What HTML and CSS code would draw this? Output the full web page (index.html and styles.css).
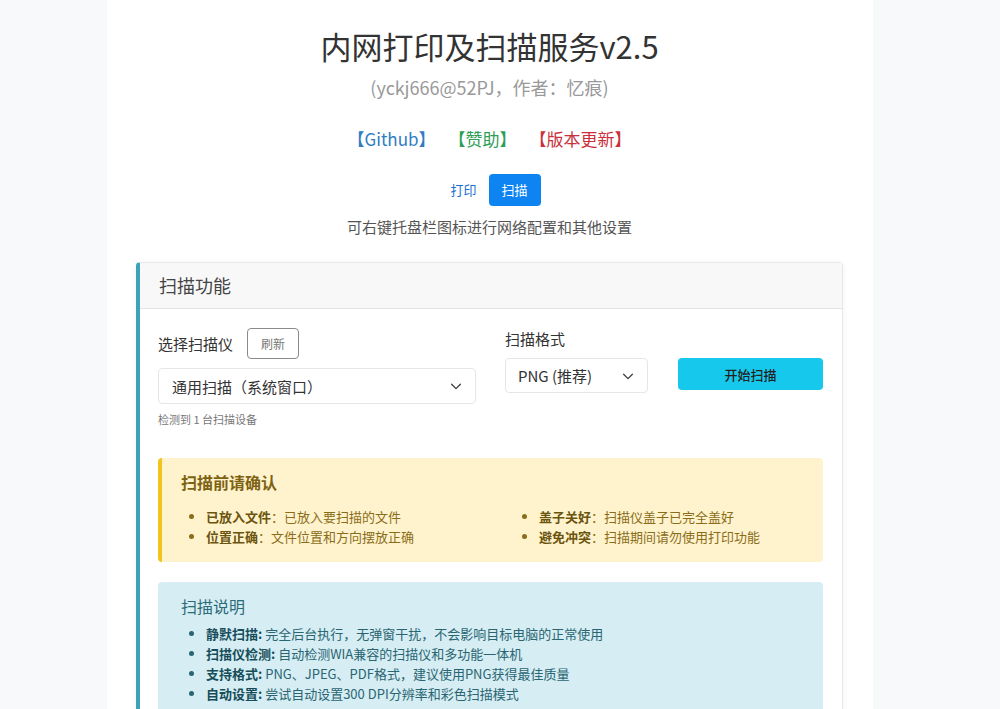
FILE: index.html
```html
<!DOCTYPE html>
<html lang="zh-CN">
<head>
  <meta charset="UTF-8">
  <meta name="viewport" content="width=device-width, initial-scale=1.0">
  <title>内网打印及扫描服务v2.5</title>
  <link rel="stylesheet" href="styles.css">
</head>
<body>
  <div class="page">
    <h1 class="title">内网打印及扫描服务v2.5</h1>
    <p class="subtitle">(yckj666@52PJ，作者：忆痕)</p>

    <div class="links">
      <a class="link-github" href="#">【Github】</a>
      <a class="link-donate" href="#">【赞助】</a>
      <a class="link-update" href="#">【版本更新】</a>
    </div>

    <div class="tabs">
      <a class="tab" href="#">打印</a>
      <a class="tab active" href="#">扫描</a>
    </div>

    <p class="note">可右键托盘栏图标进行网络配置和其他设置</p>

    <div class="card">
      <div class="card-header">扫描功能</div>
      <div class="card-body">
        <div class="form-row">
          <div class="form-col">
            <div class="label-row">
              <label>选择扫描仪</label>
              <button type="button" class="btn-refresh">刷新</button>
            </div>
            <div class="select select-wide">
              <span>通用扫描（系统窗口）</span>
              <svg width="14" height="14" viewBox="0 0 16 16"><path d="M3 6l5 5 5-5" fill="none" stroke="#444" stroke-width="1.6" stroke-linecap="round" stroke-linejoin="round"/></svg>
            </div>
            <div class="hint">检测到 1 台扫描设备</div>
          </div>
          <div class="form-col">
            <label class="label-plain">扫描格式</label>
            <div class="format-row">
              <div class="select select-small">
                <span>PNG (推荐)</span>
                <svg width="14" height="14" viewBox="0 0 16 16"><path d="M3 6l5 5 5-5" fill="none" stroke="#444" stroke-width="1.6" stroke-linecap="round" stroke-linejoin="round"/></svg>
              </div>
              <button type="button" class="btn-scan">开始扫描</button>
            </div>
          </div>
        </div>

        <div class="alert alert-warning">
          <div class="alert-title">扫描前请确认</div>
          <div class="check-grid">
            <ul>
              <li><b>已放入文件</b>：已放入要扫描的文件</li>
              <li><b>位置正确</b>：文件位置和方向摆放正确</li>
            </ul>
            <ul>
              <li><b>盖子关好</b>：扫描仪盖子已完全盖好</li>
              <li><b>避免冲突</b>：扫描期间请勿使用打印功能</li>
            </ul>
          </div>
        </div>

        <div class="alert alert-info">
          <div class="alert-title">扫描说明</div>
          <ul>
            <li><b>静默扫描:</b> 完全后台执行，无弹窗干扰，不会影响目标电脑的正常使用</li>
            <li><b>扫描仪检测:</b> 自动检测WIA兼容的扫描仪和多功能一体机</li>
            <li><b>支持格式:</b> PNG、JPEG、PDF格式，建议使用PNG获得最佳质量</li>
            <li><b>自动设置:</b> 尝试自动设置300 DPI分辨率和彩色扫描模式</li>
          </ul>
        </div>
      </div>
    </div>
  </div>
</body>
</html>
```

FILE: styles.css
```css
body {
  margin: 0;
  padding-right: 20px;
  font-family: "Noto Sans CJK SC", "Noto Sans", sans-serif;
  background-color: #f8f9fb;
  color: #333;
  height: 709px;
  overflow: hidden;
}

.page {
  width: 766px;
  margin: 0 auto;
  background-color: #fff;
  padding: 28px 30px 40px 29px;
  box-sizing: border-box;
  text-align: center;
}

.title {
  margin: 0;
  font-size: 31px;
  line-height: 36px;
  font-weight: 400;
  color: #333;
}

.subtitle {
  margin: 10px 0 0;
  font-size: 18px;
  line-height: 26px;
  color: #999;
}

.links {
  margin-top: 27px;
  font-size: 17px;
  line-height: 24px;
  display: flex;
  justify-content: center;
  gap: 13px;
}

.links a {
  text-decoration: none;
}

.link-github { color: #2f7cc4; }
.link-donate { color: #2e9e55; }
.link-update { color: #c9303c; }

.tabs {
  margin-top: 23px;
  display: flex;
  justify-content: center;
}

.tab {
  display: block;
  padding: 0 12px;
  height: 32px;
  line-height: 32px;
  font-size: 13px;
  color: #1a6fd0;
  text-decoration: none;
  border-radius: 4px;
}

.tab.active {
  background-color: #0d84f2;
  color: #fff;
  padding: 0 13px;
}

.note {
  margin: 10px 0 0;
  font-size: 15px;
  line-height: 22px;
  color: #555;
}

.card {
  margin-top: 24px;
  text-align: left;
  border: 1px solid #e8e8e8;
  border-left: 4px solid #3aa3b5;
  border-radius: 4px;
  box-shadow: 0 1px 6px rgba(0, 0, 0, 0.06);
}

.card-header {
  height: 45px;
  line-height: 45px;
  padding: 0 19px;
  font-size: 18px;
  color: #444;
  background-color: #f8f8f8;
  border-bottom: 1px solid #e3e3e3;
}

.card-body {
  padding: 19px 19px 20px 18px;
}

.form-row {
  display: grid;
  grid-template-columns: 318px 318px;
  column-gap: 29px;
}

label {
  font-size: 15px;
  color: #333;
}

.label-row {
  display: flex;
  align-items: center;
  gap: 14px;
  height: 31px;
}

.btn-refresh {
  height: 31px;
  padding: 0 13px;
  font-family: inherit;
  font-size: 12px;
  color: #777;
  background: #fff;
  border: 1px solid #8a8a8a;
  border-radius: 4px;
}

.select {
  display: flex;
  align-items: center;
  justify-content: space-between;
  box-sizing: border-box;
  border: 1px solid #e6e6e6;
  border-radius: 4px;
  background: #fff;
  font-size: 15px;
  color: #333;
}

.select-wide {
  margin-top: 9px;
  height: 36px;
  padding: 0 12px 0 13px;
}

.select-small {
  width: 143px;
  height: 35px;
  padding: 0 12px;
}

.hint {
  margin-top: 7px;
  font-size: 11px;
  color: #777;
}

.label-plain {
  display: block;
  height: 22px;
  line-height: 22px;
}

.format-row {
  margin-top: 8px;
  display: flex;
  align-items: flex-start;
  gap: 30px;
}

.btn-scan {
  width: 145px;
  height: 32px;
  font-family: inherit;
  font-size: 13px;
  font-weight: 500;
  color: #222;
  background-color: #16c9ec;
  border: none;
  border-radius: 4px;
}

.alert {
  border-radius: 4px;
  font-size: 13px;
  line-height: 20px;
}

.alert ul {
  margin: 0;
  padding-left: 25px;
}

.alert b {
  font-weight: 700;
}

.alert-warning {
  margin-top: 31px;
  padding: 12px 22px 15px 19px;
  background-color: #fff3cd;
  border-left: 4px solid #f2c51c;
  color: #8a6d1a;
}

.alert-warning .alert-title {
  font-size: 16px;
  line-height: 24px;
  font-weight: 600;
  color: #7d6212;
  margin-bottom: 13px;
}

.alert-warning b {
  color: #6b540e;
}

.check-grid {
  display: grid;
  grid-template-columns: 1fr 1fr;
  column-gap: 46px;
}

.alert-info {
  margin-top: 20px;
  padding: 12px 22px 15px 23px;
  background-color: #d5edf3;
  color: #2a6572;
}

.alert-info .alert-title {
  font-size: 16px;
  line-height: 24px;
  color: #2c6a78;
  margin-bottom: 6px;
}

.alert-info b {
  color: #174d5a;
}
```
